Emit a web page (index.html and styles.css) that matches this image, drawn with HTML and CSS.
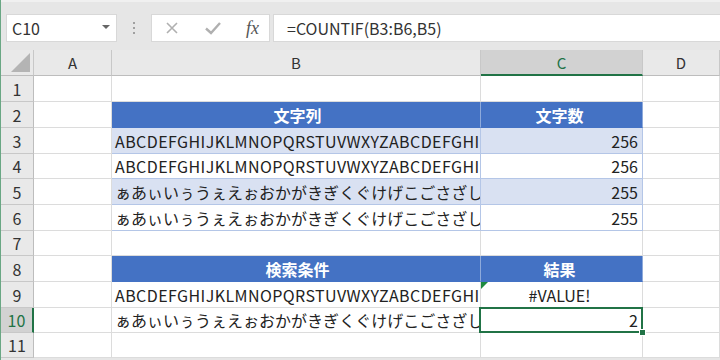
FILE: index.html
```html
<!DOCTYPE html>
<html lang="ja">
<head>
    <meta charset="UTF-8">
    <title>COUNTIF</title>
    <link rel="stylesheet" href="styles.css">
</head>
<body>
    <div class="app">
        <!-- Formula bar -->
        <div class="toolbar">
            <div class="name-box">
                <span>C10</span>
                <span class="drop"></span>
            </div>
            <div class="dots"><i></i><i></i><i></i></div>
            <div class="fx-btns">
                <svg class="btn" width="16" height="16" viewBox="0 0 16 16"><path d="M3 3L13 13M13 3L3 13" stroke="#b0b0b0" stroke-width="1.6" fill="none"/></svg>
                <svg class="btn" width="18" height="16" viewBox="0 0 18 16"><path d="M2 8.5L7 13L16 3" stroke="#b0b0b0" stroke-width="2.4" fill="none"/></svg>
                <span class="fx">fx</span>
            </div>
            <div class="formula">=COUNTIF(B3:B6,B5)</div>
        </div>

        <!-- Sheet -->
        <div class="sheet">
            <div class="row colhead">
                <div class="rh corner"><span class="tri"></span></div>
                <div class="ca">A</div>
                <div class="cb">B</div>
                <div class="cc active">C</div>
                <div class="cd">D</div>
            </div>

            <div class="row">
                <div class="rh">1</div><div class="ca"></div><div class="cb"></div><div class="cc"></div><div class="cd"></div>
            </div>
            <div class="row">
                <div class="rh">2</div><div class="ca"></div>
                <div class="cb th">文字列</div><div class="cc th">文字数</div><div class="cd"></div>
            </div>
            <div class="row">
                <div class="rh">3</div><div class="ca"></div>
                <div class="cb td band latin">ABCDEFGHIJKLMNOPQRSTUVWXYZABCDEFGHIJKLMNOP</div>
                <div class="cc td band num">256</div><div class="cd"></div>
            </div>
            <div class="row h25">
                <div class="rh">4</div><div class="ca"></div>
                <div class="cb td latin">ABCDEFGHIJKLMNOPQRSTUVWXYZABCDEFGHIJKLMNOP</div>
                <div class="cc td num">256</div><div class="cd"></div>
            </div>
            <div class="row">
                <div class="rh">5</div><div class="ca"></div>
                <div class="cb td band">ぁあぃいぅうぇえぉおかがきぎくぐけげこごさざしじす</div>
                <div class="cc td band num">255</div><div class="cd"></div>
            </div>
            <div class="row">
                <div class="rh">6</div><div class="ca"></div>
                <div class="cb td">ぁあぃいぅうぇえぉおかがきぎくぐけげこごさざしじす</div>
                <div class="cc td num">255</div><div class="cd"></div>
            </div>
            <div class="row h25">
                <div class="rh">7</div><div class="ca"></div><div class="cb"></div><div class="cc"></div><div class="cd"></div>
            </div>
            <div class="row">
                <div class="rh">8</div><div class="ca"></div>
                <div class="cb th">検索条件</div><div class="cc th">結果</div><div class="cd"></div>
            </div>
            <div class="row">
                <div class="rh">9</div><div class="ca"></div>
                <div class="cb latin">ABCDEFGHIJKLMNOPQRSTUVWXYZABCDEFGHIJKLMNOP</div>
                <div class="cc center err">#VALUE!</div><div class="cd"></div>
            </div>
            <div class="row h25">
                <div class="rh active">10</div><div class="ca"></div>
                <div class="cb">ぁあぃいぅうぇえぉおかがきぎくぐけげこごさざしじす</div>
                <div class="cc num sel">2</div><div class="cd"></div>
            </div>
            <div class="row h25">
                <div class="rh">11</div><div class="ca"></div><div class="cb"></div><div class="cc"></div><div class="cd"></div>
            </div>
        </div>
    </div>
</body>
</html>
```

FILE: styles.css
```css
/* Excel-like sheet */
body {
    margin: 0;
    font-family: "Noto Sans CJK JP", "Noto Sans", sans-serif;
    color: #222;
    background-color: #e6e6e6;
}

.app {
    width: 720px;
    height: 360px;
    overflow: hidden;
    border-left: 1px solid #6aa784;
    box-sizing: border-box;
}

/* Formula bar */
.toolbar {
    height: 50px;
    display: flex;
    align-items: flex-start;
    padding-top: 12px;
    padding-left: 5px;
    box-sizing: border-box;
    border-top: 2px solid #f0f0f0;
}

.name-box,
.fx-btns,
.formula {
    height: 28px;
    background-color: #fff;
    border: 1px solid #d8d8d8;
    box-sizing: border-box;
    display: flex;
    align-items: center;
}

.name-box {
    width: 111px;
    padding: 0 6px 0 5px;
    justify-content: space-between;
    font-size: 16px;
    color: #333;
}

.name-box .drop {
    width: 0;
    height: 0;
    border-left: 4px solid transparent;
    border-right: 4px solid transparent;
    border-top: 4px solid #666;
    margin-bottom: 2px;
}

.dots {
    width: 34px;
    height: 28px;
    display: flex;
    flex-direction: column;
    align-items: center;
    justify-content: center;
    gap: 3px;
}

.dots i {
    width: 2px;
    height: 2px;
    background-color: #a0a0a0;
}

.fx-btns {
    width: 119px;
    padding: 0 10px 0 12px;
    justify-content: space-between;
}

.fx {
    font-family: "Liberation Serif", serif;
    font-style: italic;
    font-size: 18px;
    color: #555;
}

.formula {
    flex: 1;
    margin-left: 3px;
    padding-left: 13px;
    font-size: 16px;
    color: #333;
    border-right: none;
}

/* Grid */
.row {
    display: flex;
    height: 26px;
}

.row.h25 {
    height: 25px;
}

.row > div {
    box-sizing: border-box;
    border-right: 1px solid #dcdcdc;
    border-bottom: 1px solid #dcdcdc;
    background-color: #fff;
    display: flex;
    align-items: center;
    white-space: nowrap;
    overflow: hidden;
    font-size: 16px;
    position: relative;
}

.rh {
    width: 33px;
    flex: none;
    justify-content: center;
    font-size: 16px;
    color: #333;
}

.row > .rh {
    background-color: #e9e9e9;
    border-right-color: #bdbdbd;
    border-bottom-color: #c8c8c8;
}

.ca { width: 78px; flex: none; }
.cb { width: 369px; flex: none; padding-left: 3px; }
.cc { width: 162px; flex: none; padding-right: 4px; }
.cd { flex: 1; }

.latin {
    letter-spacing: 0.42px;
}

/* Column headers */
.colhead > div {
    justify-content: center;
    font-size: 15px;
    color: #333;
    padding: 0;
}

.row.colhead > div {
    background-color: #e9e9e9;
    border-right-color: #c8c8c8;
    border-bottom-color: #bdbdbd;
}

.row.colhead > .active {
    background-color: #d2d2d2;
    color: #217346;
    border-bottom: 2px solid #217346;
}

.row > .rh.active {
    background-color: #d2d2d2;
    color: #217346;
    border-right: 2px solid #217346;
}

.corner .tri {
    position: absolute;
    right: 3px;
    bottom: 3px;
    width: 0;
    height: 0;
    border-left: 19px solid transparent;
    border-bottom: 19px solid #b4b4b4;
}

/* Tables */
.row > .th {
    background-color: #4472c4;
    color: #fff;
    font-weight: bold;
    justify-content: center;
    border-bottom-color: #4472c4;
    border-right-color: #8eaadb;
}

.row > .td {
    border-bottom-color: #b4c6e7;
    border-right-color: #b4c6e7;
}

.row > .band {
    background-color: #d9e1f2;
}

.num {
    justify-content: flex-end;
}

.center {
    justify-content: center;
}

/* Error marker */
.err::before {
    content: "";
    position: absolute;
    left: 0;
    top: 0;
    border-top: 7px solid #1e8a3e;
    border-right: 7px solid transparent;
}

/* Selected cell */
.row > .sel {
    overflow: visible;
    z-index: 1;
}

.sel::before {
    content: "";
    position: absolute;
    left: -2px;
    top: -1px;
    right: -1px;
    bottom: -1px;
    border: 2px solid #217346;
}

.sel::after {
    content: "";
    position: absolute;
    right: -4px;
    bottom: -4px;
    width: 5px;
    height: 5px;
    background-color: #217346;
    border: 1px solid #fff;
}
```
